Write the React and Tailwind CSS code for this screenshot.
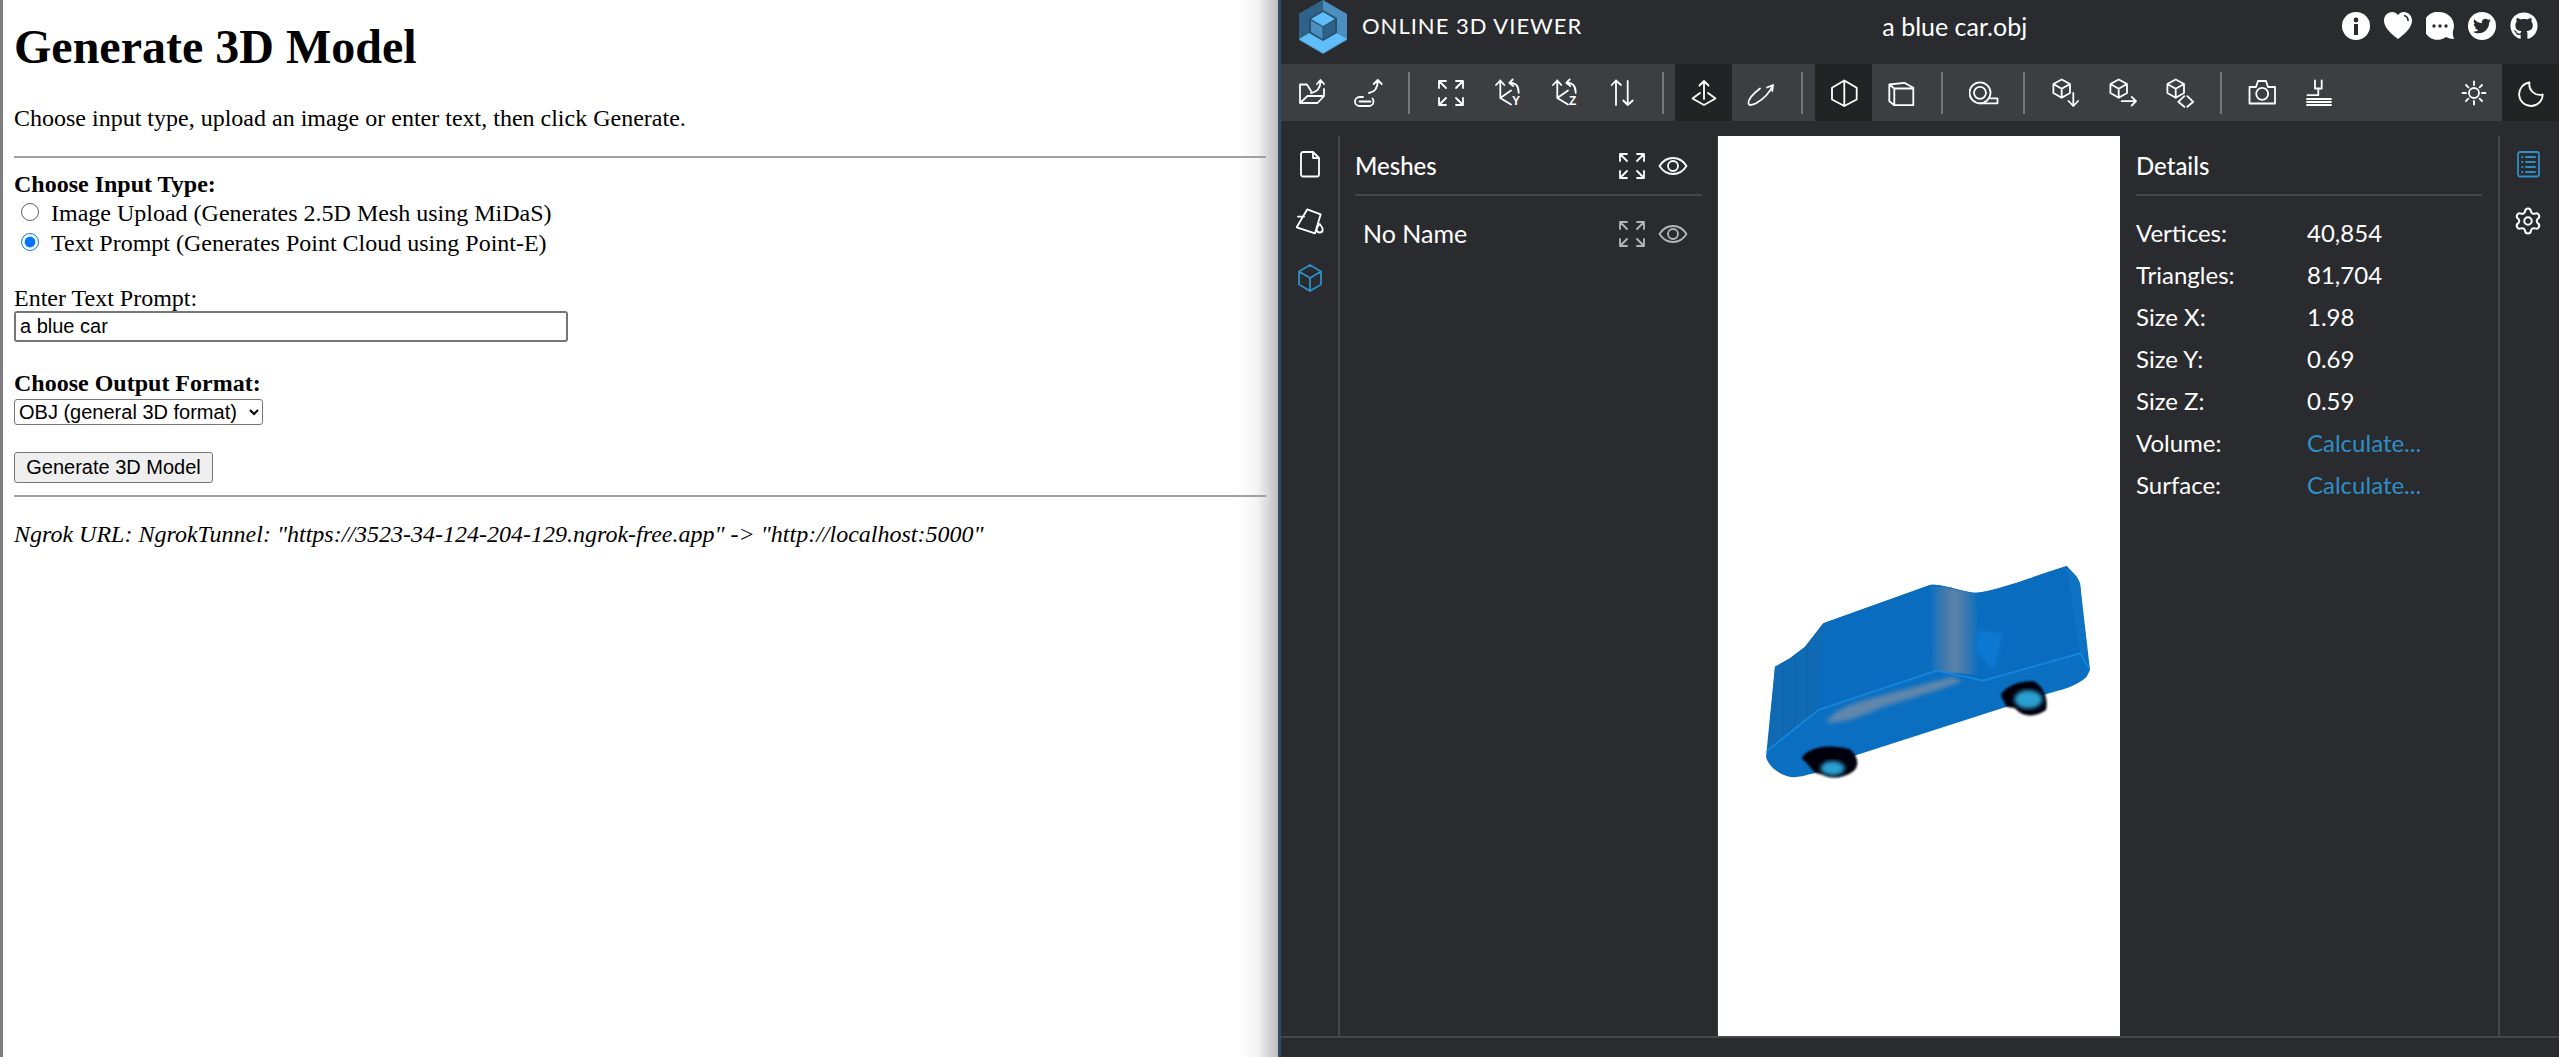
import { Settings } from "lucide-react";
import { FaGithub, FaTwitter } from "react-icons/fa";

function Ico({ children, className = "stroke-white" }) {
  return (
    <svg viewBox="0 0 30 30" width="30" height="30" className={`fill-none stroke-[1.8] shrink-0 ${className}`} strokeLinecap="round" strokeLinejoin="round">
      {children}
    </svg>
  );
}

function Fit() {
  return (
    <Ico>
      <path d="M3 10V3h7M3 3l7 7M20 3h7v7M27 3l-7 7M3 20v7h7M3 27l7-7M27 20v7h-7M27 27l-7-7" />
    </Ico>
  );
}

function EyeIcon() {
  return (
    <Ico>
      <path d="M1.5 15C5 9.5 10 7 15 7s10 2.5 13.5 8C25 20.5 20 23 15 23S5 20.5 1.5 15z" />
      <circle cx="15" cy="15" r="5" />
    </Ico>
  );
}

function Sep() {
  return <div className="w-[2px] h-[42px] bg-[#76787c] shrink-0" />;
}

function Gap({ w }) {
  return <div className={`${w} shrink-0`} />;
}

function Tool({ active, children }) {
  return (
    <div className={`w-[57px] h-full flex items-center justify-center shrink-0 ${active ? "bg-[#222324]" : ""}`}>
      {children}
    </div>
  );
}

const cube = "M10.7 1.5l8.3 4.5v9l-8.3 4.8-8.3-4.8V6zM2.4 6l8.3 4.8L19 6M10.7 10.8v9";

function Toolbar() {
  return (
    <div className="h-[57px] flex items-center bg-[#3c3e42] pl-[2px] shrink-0">
      <Tool>
        <Ico>
          <path d="M3 25V6.5h7l4 6.5M3 25h17.5L27 18H10.5L3 25zM14 15c6-1 9.5-5 9.5-12M20 6l3.5-4L27 6M27 11v7" />
        </Ico>
      </Tool>
      <Tool>
        <Ico>
          <path d="M9 19H5.5a4.5 4.5 0 0 0 0 9H15a4.5 4.5 0 0 0 4.5-4.5 4.5 4.5 0 0 0-1-3M5.5 23.5h11M15 15c6-1 8.7-5 8.7-12M19.7 6l4-4 4 4" />
        </Ico>
      </Tool>
      <Gap w="w-[11px]" />
      <Sep />
      <Gap w="w-[12px]" />
      <Tool><Fit /></Tool>
      <Tool>
        <Ico>
          <path d="M7.3 20V2.5M3 7l4.3-4.5L11.3 7M7.3 20L18 26.5M7.3 20L18 12.5M16.3 4.8c6-.5 9.4 3 9.4 10M19.7 1.5l-3.4 3.3L20.3 8" />
          <text x="19" y="27" className="fill-white stroke-none text-[12px] font-bold font-['Liberation_Sans',sans-serif]">Y</text>
        </Ico>
      </Tool>
      <Tool>
        <Ico>
          <path d="M7.3 20V2.5M3 7l4.3-4.5L11.3 7M7.3 20L18 26.5M7.3 20L18 12.5M16.3 4.8c6-.5 9.4 3 9.4 10M19.7 1.5l-3.4 3.3L20.3 8" />
          <text x="19" y="27" className="fill-white stroke-none text-[12px] font-bold font-['Liberation_Sans',sans-serif]">Z</text>
        </Ico>
      </Tool>
      <Tool>
        <Ico>
          <path d="M9 27V2.5M4.7 7L9 2.5 14 7M20.7 3v24M16.3 22.5l4.4 4.5 5-4.5" />
        </Ico>
      </Tool>
      <Gap w="w-[12px]" />
      <Sep />
      <Gap w="w-[11px]" />
      <Tool active>
        <Ico>
          <path d="M15 3v18M10.5 7.5L15 3l4.5 4.5M11 15l-7.5 5.5L15 27l11.5-6.5L19 15" />
        </Ico>
      </Tool>
      <Tool>
        <Ico>
          <path d="M14 10.5C8 15 2 21 2.5 25.5c.3 2.5 4 1.5 8-.5 7-4 13-10 16.5-18M21 9.5l6-2.5-.7 6" />
        </Ico>
      </Tool>
      <Gap w="w-[12px]" />
      <Sep />
      <Gap w="w-[12px]" />
      <Tool active>
        <Ico>
          <path d="M15.3 2.5L27.7 9.8V21.5L15.3 28 3 21.5V9.8zM15.3 2.5V28" />
        </Ico>
      </Tool>
      <Tool>
        <Ico>
          <path d="M3.3 6.5L18.3 4.8 27.3 9.8V27.2H8.3L3.3 23.2zM8.3 10.5H27.3M8.3 10.5V27.2M3.3 6.5L8.3 10.5" />
        </Ico>
      </Tool>
      <Gap w="w-[12px]" />
      <Sep />
      <Gap w="w-[12px]" />
      <Tool>
        <Ico>
          <circle cx="11" cy="14.8" r="10.5" />
          <circle cx="11" cy="14.8" r="6" />
          <path d="M11 25.3h17.5v-5H21.5" />
        </Ico>
      </Tool>
      <Gap w="w-[11px]" />
      <Sep />
      <Gap w="w-[12px]" />
      <Tool>
        <Ico>
          <path d={cube} />
          <path d="M22.3 15v13M17.5 23l4.8 5 4.8-5" />
        </Ico>
      </Tool>
      <Tool>
        <Ico>
          <path d={cube} />
          <path d="M13.7 23.2H28M23.7 18.9L28 23.2l-4.3 4.3" />
        </Ico>
      </Tool>
      <Tool>
        <Ico>
          <path d={cube} />
          <path d="M19.3 18.2l-6 5.6 6 5M22.3 18.2l6 5.6-6 5" />
        </Ico>
      </Tool>
      <Gap w="w-[12px]" />
      <Sep />
      <Gap w="w-[12px]" />
      <Tool>
        <Ico>
          <path d="M1.5 9H8l2-6h8l2 6h7V25.5H1.5z" />
          <circle cx="14.2" cy="15.8" r="6" />
        </Ico>
      </Tool>
      <Tool>
        <Ico>
          <path d="M10 2.5V10.5H16.7V2.5M13.3 10.5V17.2H2.5M2 21H26M2 24H26M2 27H26" />
        </Ico>
      </Tool>
      <div className="flex-1" />
      <Tool>
        <Ico>
          <circle cx="15" cy="15" r="5" />
          <path d="M15 3.5v3.5M15 23v3.5M3.5 15H7M23 15h3.5M7 7l2.4 2.4M20.6 20.6L23 23M23 7l-2.4 2.4M9.4 20.6L7 23" />
        </Ico>
      </Tool>
      <Tool active>
        <Ico>
          <path d="M13.5 4.5A11.8 11.8 0 1 0 26.7 16.5 10.5 10.5 0 0 1 13.5 4.5z" />
        </Ico>
      </Tool>
    </div>
  );
}

function Logo() {
  return (
    <svg viewBox="0 0 50 54" width="50" height="54" className="shrink-0">
      <path d="M25 0L49 14V40L25 54L1 40V14z" fill="#4a8fbf" />
      <path d="M25 0V10L12 18V33L1 40V14z" fill="#2f6288" />
      <path d="M1 39L13 32L25 39L37 32L49 39L25 53z" fill="#5fbdf9" />
      <path d="M25 10L39 18V33L25 41L11 33V18z" fill="#2a4f6c" />
      <path d="M25 12L37 19L25 26L13 19z" fill="#5fbdf9" />
      <path d="M13 20.5L24.5 27V39L13 32z" fill="#4a8fbf" />
      <path d="M37 20.5L25.5 27V39L37 32z" fill="#2f6288" />
    </svg>
  );
}

function Car() {
  return (
    <svg viewBox="0 0 1140 780" width="380" height="260" className="shrink-0">
      <defs>
        <linearGradient id="band" x1="0" x2="1" y1="0" y2="0">
          <stop offset="0" stopColor="#0b6fc1" />
          <stop offset="0.25" stopColor="#3a78ae" />
          <stop offset="0.5" stopColor="#5b82a6" />
          <stop offset="0.75" stopColor="#3a78ae" />
          <stop offset="1" stopColor="#0b6fc1" />
        </linearGradient>
        <filter id="soft">
          <feGaussianBlur stdDeviation="6" />
        </filter>
        <filter id="edge">
          <feGaussianBlur stdDeviation="2.500" />
        </filter>
      </defs>
      <path d="M78 650L105 380L150 355L195 320L250 250L570 135C600 130 650 150 700 158C750 160 880 110 980 78L1010 110L1020 130L1050 390L1040 410C1010 440 960 450 920 462L800 500L350 645L222 700C200 705 180 712 160 712C120 708 85 680 78 650z" fill="#0b6fc1" />
      <path d="M105 380L150 355L195 320L250 250L235 508L82 632z" fill="#0f69b3" />
      <path d="M130 368V590M165 345V560M200 318V530" stroke="#0c62a8" strokeWidth="3" fill="none" />
      <path d="M250 250L570 135C600 130 650 150 700 158C750 160 880 110 980 78L1020 340L740 420L590 392L235 510z" fill="#0a6cbe" />
      <path d="M980 78L1010 110L1020 130L1040 340L1020 340z" fill="#0f72c2" />
      <path d="M570 138C620 140 660 152 710 162L715 405L575 392z" fill="url(#band)" />
      <path d="M715 270L790 280L760 395L705 330z" fill="#0a78d2" filter="url(#soft)" />
      <path d="M82 632L235 510L590 392L730 422L1020 340L1048 385" fill="none" stroke="#1587dd" strokeWidth="5" />
      <path d="M258 548C290 500 345 490 430 465L640 410L665 425L560 460L430 500C380 520 330 548 258 548z" fill="#6187ab" filter="url(#soft)" />
      <path d="M185 655C200 625 260 608 330 628C355 650 358 675 342 692C315 712 280 720 250 705L225 698L205 675z" fill="#01060d" filter="url(#edge)" />
      <path d="M782 465C800 435 850 420 885 425C915 445 925 480 918 510C890 530 850 535 825 505L800 500z" fill="#01060d" filter="url(#edge)" />
      <ellipse cx="278" cy="685" rx="36" ry="22" fill="#2a9fd0" filter="url(#soft)" />
      <ellipse cx="865" cy="478" rx="42" ry="28" fill="#2a9fd0" filter="url(#soft)" />
    </svg>
  );
}

const details = [
  ["Vertices:", "40,854"],
  ["Triangles:", "81,704"],
  ["Size X:", "1.98"],
  ["Size Y:", "0.69"],
  ["Size Z:", "0.59"],
  ["Volume:", "Calculate..."],
  ["Surface:", "Calculate..."],
];

function App() {
  return (
    <div className="flex h-[1057px] w-[2559px] overflow-hidden bg-white">
      {/* left page */}
      <div className="w-[1278px] shrink-0 h-full relative isolate border-l-[3px] border-[#7f7f7f] pl-[11px] pr-[12px] text-black text-[24px] leading-[25px] font-['Liberation_Serif',serif]">
        <div className="absolute right-0 top-0 bottom-0 w-[40px] -z-10 bg-gradient-to-r from-white via-[#f3f3f3] to-[#bcbcbc]" />
        <h1 className="text-[48px] leading-[50px] font-bold pt-[22px]">Generate 3D Model</h1>
        <p className="mt-[34px]">Choose input type, upload an image or enter text, then click Generate.</p>
        <div className="h-[2px] bg-[#a0a0a0] mt-[25px]" />
        <div className="font-bold mt-[14px]">Choose Input Type:</div>
        <label className="flex items-center h-[30px] mt-[1px]">
          <input type="radio" name="kind" className="appearance-none rounded-full border border-[#606060] bg-white w-[18px] h-[18px] ml-[7px] mr-[12px] -mt-[3px]" />
          Image Upload (Generates 2.5D Mesh using MiDaS)
        </label>
        <label className="flex items-center h-[30px]">
          <input type="radio" name="kind" defaultChecked className="accent-[#0075ff] w-[18px] h-[18px] ml-[7px] mr-[12px] -mt-[3px]" />
          Text Prompt (Generates Point Cloud using Point-E)
        </label>
        <div className="mt-[28px]">Enter Text Prompt:</div>
        <input
          readOnly
          value="a blue car"
          className="block w-[554px] h-[31px] border-2 border-[#767676] rounded-[3px] px-[4px] text-[20px] font-['Liberation_Sans',sans-serif] mt-[0px]"
        />
        <div className="font-bold mt-[29px]">Choose Output Format:</div>
        <select className="block w-[249px] h-[26px] border border-[#767676] rounded-[3px] text-[20px] font-['Liberation_Sans',sans-serif] mt-[3px] bg-white">
          <option>OBJ (general 3D format)</option>
        </select>
        <button className="block w-[199px] h-[31px] border border-[#767676] rounded-[3px] bg-[#efefef] text-[20px] font-['Liberation_Sans',sans-serif] mt-[27px]">
          Generate 3D Model
        </button>
        <div className="h-[2px] bg-[#a0a0a0] mt-[12px]" />
        <p className="italic mt-[25px] whitespace-nowrap">Ngrok URL: NgrokTunnel: "https://3523-34-124-204-129.ngrok-free.app" -&gt; "http://localhost:5000"</p>
      </div>

      {/* viewer */}
      <div className="flex-1 flex flex-col h-full bg-[#2a2b2e] border-l-[3px] border-[#2f4a6b] text-white font-['Lato',sans-serif]">
        <div className="h-[64px] flex items-start pl-[17px] shrink-0">
          <Logo />
          <span className="ml-[14px] mt-[13px] text-[22px] leading-[26px] tracking-[1px]">ONLINE 3D VIEWER</span>
          <span className="ml-[300px] mt-[12px] text-[25px] leading-[28px]">a blue car.obj</span>
          <div className="ml-auto mr-[21px] mt-[12px] flex gap-[14px] items-center">
            <svg viewBox="0 0 28 28" width="28" height="28">
              <circle cx="14" cy="14" r="14" fill="#fff" />
              <circle cx="14" cy="8" r="2.4" fill="#2a2b2e" />
              <rect x="12" y="12" width="4" height="11" fill="#2a2b2e" />
            </svg>
            <svg viewBox="0 0 28 28" width="28" height="28">
              <path d="M14 27C6 21 0 15 0 8.5 0 3.5 4 0 8 0c2.500 0 4.500 1 6 3 1.500-2 3.500-3 6-3 4 0 8 3.500 8 8.500C28 15 22 21 14 27z" fill="#fff" />
              <path d="M20 3.500c2.500.5 4 2.500 4.200 5.500" fill="none" stroke="#2a2b2e" strokeWidth="1.6" />
            </svg>
            <svg viewBox="0 0 28 28" width="28" height="28">
              <path d="M14 0a14 14 0 0 1 13 19c-.5 2 0 5 1 8-3 0-6-1-8-2A14 14 0 1 1 14 0z" fill="#fff" />
              <circle cx="8" cy="14" r="1.700" fill="#2a2b2e" />
              <circle cx="14" cy="14" r="1.700" fill="#2a2b2e" />
              <circle cx="20" cy="14" r="1.700" fill="#2a2b2e" />
            </svg>
            <div className="w-[28px] h-[28px] rounded-full bg-white flex items-center justify-center">
              <FaTwitter size={18} color="#2a2b2e" />
            </div>
            <FaGithub size={28} color="#fff" />
          </div>
        </div>
        <Toolbar />
        <div className="flex-1 flex pt-[15px] min-h-0">
          <div className="w-[59px] shrink-0 border-r-2 border-[#46474a] flex flex-col items-center pt-[13px] gap-[27px]">
            <Ico>
              <path d="M8 3h10l6 6v16.500a2 2 0 0 1-2 2H8a2 2 0 0 1-2-2V5a2 2 0 0 1 2-2zM18 3v6h6" />
            </Ico>
            <Ico>
              <path d="M12.300 3.300L25.700 8.300 20 27.300 1.700 21.300zM3 10.700h6M24.700 18c2 2.500 3 4 3 5.500a3 3 0 0 1-6 0c0-1.500 1-3 3-5.500z" />
            </Ico>
            <Ico className="stroke-[#2f8fc7]">
              <path d="M15 2l11 6.500v13L15 28 4 21.500v-13zM4 8.500L15 15l11-6.500M15 15v13" />
            </Ico>
          </div>
          <div className="w-[378px] shrink-0 pl-[15px] pr-[15px] border-r border-[#3c3e42]">
            <div className="h-[60px] border-b-2 border-[#46474a] flex items-center pt-[2px] pr-[14px]">
              <span className="text-[24px] font-medium">Meshes</span>
              <div className="ml-auto flex items-center gap-[11px]">
                <Fit />
                <EyeIcon />
              </div>
            </div>
            <div className="h-[76px] flex items-center pl-[8px] pr-[14px]">
              <span className="text-[25px]">No Name</span>
              <div className="ml-auto flex items-center gap-[11px] opacity-65">
                <Fit />
                <EyeIcon />
              </div>
            </div>
          </div>
          <div className="w-[402px] shrink-0 bg-white flex items-end justify-start pl-[22px] pb-[236px]">
            <Car />
          </div>
          <div className="w-[378px] shrink-0 px-[16px]">
            <div className="h-[60px] border-b-2 border-[#46474a] flex items-center pt-[2px]">
              <span className="text-[24px] font-medium">Details</span>
            </div>
            <div className="pt-[16px]">
              {details.map(([k, v]) => (
                <div key={k} className="flex h-[42px] items-center text-[24px]">
                  <span className="w-[171px]">{k}</span>
                  <span className={v.startsWith("Calc") ? "text-[#2f8fc7]" : ""}>{v}</span>
                </div>
              ))}
            </div>
          </div>
          <div className="flex-1 border-l-2 border-[#46474a] flex flex-col items-center pr-[3px] pt-[13px] gap-[27px]">
            <Ico className="stroke-[#2f8fc7]">
              <rect x="5" y="3" width="21" height="24.500" rx="2" />
              <path d="M13 8h9M13 13h9M13 18h9M13 23h9M9 8h.5M9 13h.5M9 18h.5M9 23h.5" />
            </Ico>
            <Settings size={30} strokeWidth={1.6} />
          </div>
        </div>
        <div className="h-[21px] border-t-2 border-[#46474a] shrink-0" />
      </div>
    </div>
  );
}

export default App;
